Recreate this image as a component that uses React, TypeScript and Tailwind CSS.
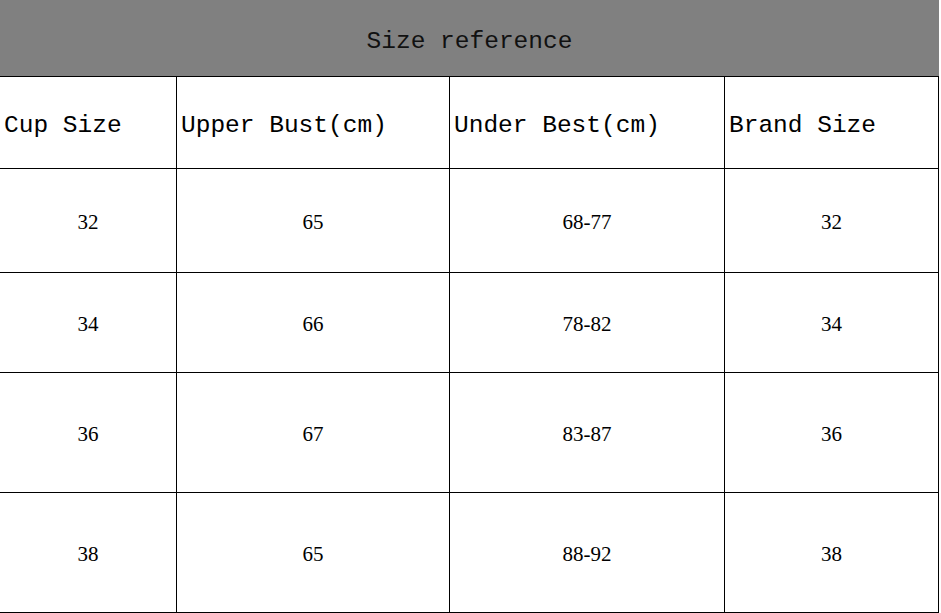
import React from "react";

const headers = ["Cup Size", "Upper Bust(cm)", "Under Best(cm)", "Brand Size"];

const rows = [
  { h: "h-[104px]", cells: ["32", "65", "68-77", "32"] },
  { h: "h-[100px]", cells: ["34", "66", "78-82", "34"] },
  { h: "h-[120px]", cells: ["36", "67", "83-87", "36"] },
  { h: "h-[120px]", cells: ["38", "65", "88-92", "38"] },
];

export default function App() {
  return (
    <div className="w-[941px] h-[613px] bg-white overflow-hidden">
      <div className="w-[939px]">
        {/* Title bar */}
        <div className="h-[76px] bg-[#808080] flex items-center justify-center pt-[9px]">
          <h1 className="text-[24.5px] text-[#111] font-['Liberation_Mono',monospace]">
            Size reference
          </h1>
        </div>

        {/* Size grid */}
        <div className="grid grid-cols-[176px_273px_275px_215px] border-t border-black">
          {headers.map((h, i) => (
            <div
              key={h}
              className={`h-[92px] border-b border-black flex items-center pl-1 pt-[7px] text-[24.5px] text-black font-['Liberation_Mono',monospace] whitespace-nowrap ${
                i > 0 ? "border-l" : ""
              } ${i === 3 ? "border-r" : ""}`}
            >
              {h}
            </div>
          ))}
          {rows.map((r, ri) =>
            r.cells.map((c, i) => (
              <div
                key={`${ri}-${i}`}
                className={`${r.h} border-b border-black flex items-center justify-center pt-1 text-[21px] font-medium text-black font-['Liberation_Serif',serif] ${
                  i > 0 ? "border-l" : ""
                } ${i === 3 ? "border-r" : ""}`}
              >
                {c}
              </div>
            ))
          )}
        </div>
      </div>
    </div>
  );
}
